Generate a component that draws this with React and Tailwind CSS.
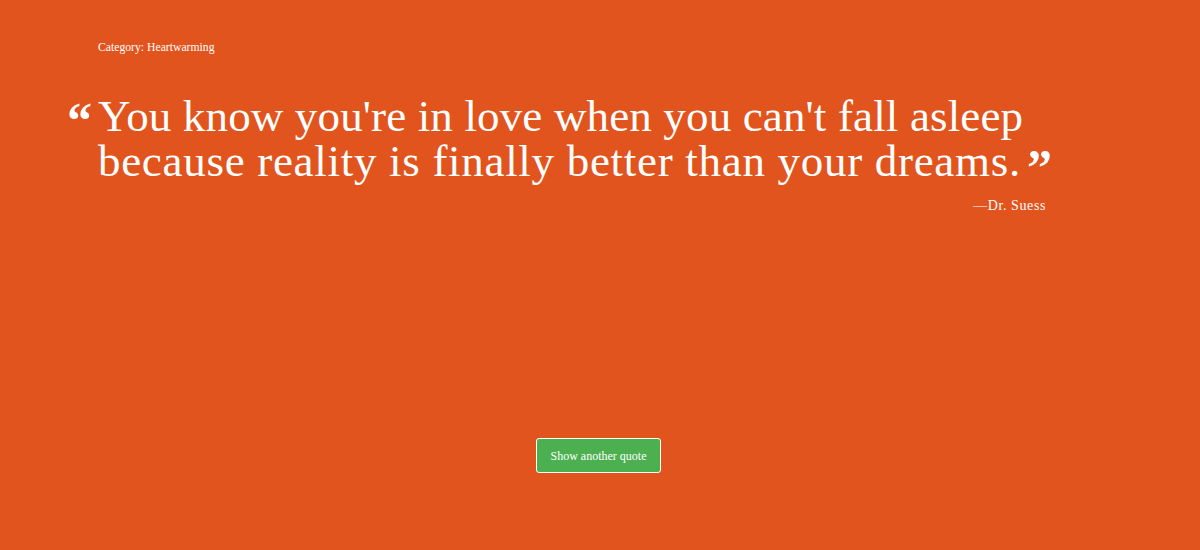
export default function App() {
  return (
    <div className="w-[1200px] h-[550px] bg-[#e1541d] text-white flex flex-col" style={{ fontFamily: '"Liberation Serif", serif' }}>
      <div className="pl-[98px] pt-[41px] text-[11.7px] leading-[14px]">Category: Heartwarming</div>
      <div className="pl-[98px] pr-[100px] mt-[39px] relative">
        <span className="absolute left-[67px] top-[4px] text-[50px] leading-[44px] font-bold">“</span>
        <p className="text-[45px] leading-[45px] whitespace-nowrap">
          <span className="tracking-[0.15px]">You know you're in love when you can't fall asleep</span>
          <br />
          <span className="tracking-[0.7px]">because reality is finally better than your dreams.</span>
          <span className="text-[50px] font-bold ml-[6px] align-[-8px]">”</span>
        </p>
        <div className="text-right pr-[54px] mt-[5px] text-[14px] tracking-[0.6px]">—Dr. Suess</div>
      </div>
      <div className="flex justify-center mt-auto mb-[77px] pr-[3px]">
        <button className="w-[125px] h-[35px] bg-[#4caf50] border border-white rounded-[3px] text-[12px] text-white whitespace-nowrap">Show another quote</button>
      </div>
    </div>
  );
}
